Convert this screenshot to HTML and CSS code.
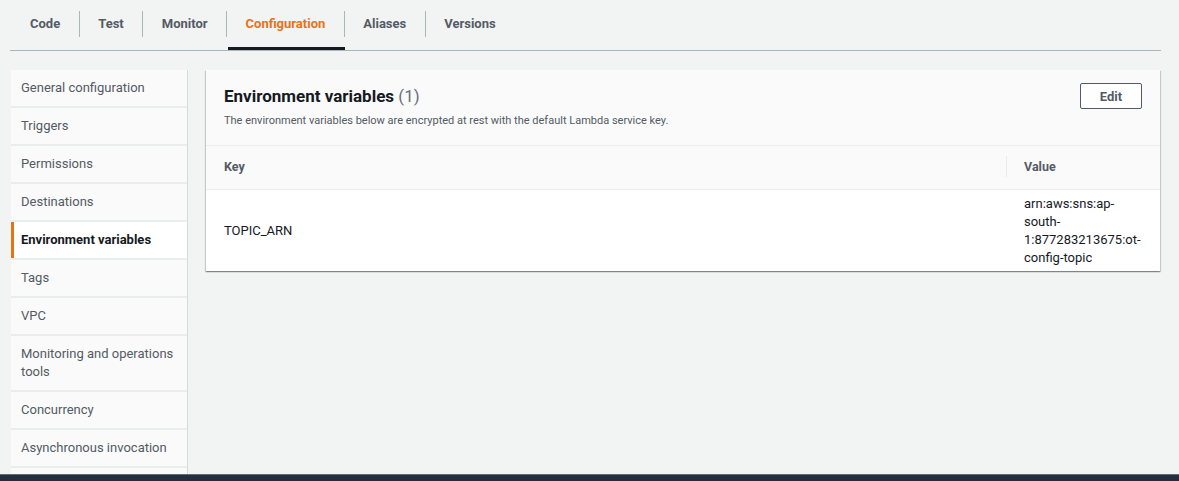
FILE: index.html
```html
<!DOCTYPE html>
<html lang="en">
<head>
<meta charset="utf-8">
<title>Configuration - Environment variables</title>
<link rel="stylesheet" href="styles.css">
</head>
<body>
<div class="page">
  <nav class="tabs">
    <div class="tab"><div class="tab-inner">Code</div><div class="tab-line"></div></div>
    <div class="tab"><div class="tab-inner">Test</div><div class="tab-line"></div></div>
    <div class="tab"><div class="tab-inner">Monitor</div><div class="tab-line"></div></div>
    <div class="tab active"><div class="tab-inner">Configuration</div><div class="tab-line"></div></div>
    <div class="tab"><div class="tab-inner">Aliases</div><div class="tab-line"></div></div>
    <div class="tab last"><div class="tab-inner">Versions</div><div class="tab-line"></div></div>
  </nav>

  <div class="content">
    <ul class="sidebar">
      <li class="side-item">General configuration</li>
      <li class="side-item">Triggers</li>
      <li class="side-item">Permissions</li>
      <li class="side-item">Destinations</li>
      <li class="side-item active">Environment variables</li>
      <li class="side-item">Tags</li>
      <li class="side-item">VPC</li>
      <li class="side-item">Monitoring and operations tools</li>
      <li class="side-item">Concurrency</li>
      <li class="side-item">Asynchronous invocation</li>
      <li class="side-item side-empty"></li>
    </ul>

    <section class="panel">
      <header class="panel-header">
        <div class="panel-title-row">
          <h2 class="panel-title">Environment variables <span class="count">(1)</span></h2>
          <button class="btn">Edit</button>
        </div>
        <p class="panel-desc">The environment variables below are encrypted at rest with the default Lambda service key.</p>
      </header>
      <div class="table">
        <div class="th th-key">Key</div>
        <div class="th th-value"><div class="th-divider">Value</div></div>
        <div class="td td-key">TOPIC_ARN</div>
        <div class="td td-value">arn:aws:sns:ap-south-1:877283213675:ot-config-topic</div>
      </div>
    </section>
  </div>
</div>
<div class="footer-bar"></div>
</body>
</html>
```

FILE: styles.css
```css
* { box-sizing: border-box; }

html, body {
  margin: 0;
  padding: 0;
  height: 481px;
  overflow: hidden;
}

body {
  background: #f2f3f3;
  font-family: Roboto, "Liberation Sans", Arial, sans-serif;
  color: #16191f;
}

/* Tabs */
.tabs {
  display: flex;
  height: 51px;
  margin: 0 18px 0 10px;
  border-bottom: 1px solid #aab7b8;
}

.tab {
  display: flex;
  flex-direction: column;
}

.tab-inner {
  margin-top: 11px;
  height: 26px;
  padding: 0 18.5px 1px 18.5px;
  display: flex;
  align-items: center;
  border-right: 1px solid #aab7b8;
  font-size: 13px;
  font-weight: 700;
  color: #545b64;
  line-height: 16px;
}

.tab:first-child .tab-inner { padding-left: 20px; }
.tab.last .tab-inner { border-right: none; }

.tab-line {
  margin-top: auto;
  height: 3px;
  margin-left: 1px;
}

.tab.active .tab-inner { color: #ec7211; }
.tab.active .tab-line { background: #16191f; }

/* Content */
.content {
  display: flex;
  align-items: flex-start;
  gap: 18px;
  padding: 19px 19px 0 11px;
}

.sidebar {
  list-style: none;
  margin: 0;
  padding: 0;
  width: 177px;
  flex: none;
  background: #eaeded;
  border-right: 1px solid #d5dbdb;
}

.side-item {
  background: #fafafa;
  padding: 9px 10px 9px 7px;
  font-size: 13px;
  line-height: 18px;
  color: #545b64;
  margin-bottom: 2px;
  border-left: 3px solid transparent;
}

.side-item.side-empty {
  height: 8px;
  padding: 0;
  margin-bottom: 0;
}

.side-item.active {
  background: #ffffff;
  border-left-color: #ec7211;
  color: #16191f;
  font-weight: 700;
}

/* Panel */
.panel {
  flex: 1;
  background: #ffffff;
  box-shadow: 0 1px 1px 0 rgba(0, 28, 36, 0.3), 1px 1px 1px 0 rgba(0, 28, 36, 0.15), -1px 1px 1px 0 rgba(0, 28, 36, 0.15);
}

.panel-header {
  background: #fafafa;
  padding: 13px 18px 16px 18px;
  border-bottom: 1px solid #eaeded;
}

.panel-title-row {
  display: flex;
  justify-content: space-between;
  align-items: center;
  height: 26px;
}

.panel-title {
  margin: 0;
  font-size: 17px;
  font-weight: 700;
  line-height: 26px;
  color: #16191f;
}

.count {
  font-weight: 400;
  color: #687078;
}

.btn {
  width: 62px;
  height: 26px;
  border: 1px solid #545b64;
  border-radius: 2px;
  background: #ffffff;
  color: #545b64;
  font-family: inherit;
  font-size: 13px;
  font-weight: 700;
  padding: 0;
}

.panel-desc {
  margin: 4px 0 0 0;
  font-size: 11px;
  line-height: 16px;
  color: #545b64;
}

/* Table */
.table {
  display: grid;
  grid-template-columns: 1fr 154px;
}

.th {
  background: #fafafa;
  height: 44px;
  padding-bottom: 2px;
  border-bottom: 1px solid #eaeded;
  font-size: 12.5px;
  font-weight: 700;
  color: #545b64;
  display: flex;
  align-items: center;
}

.th-key { padding-left: 18px; padding-right: 18px; }

.th-divider {
  border-left: 1px solid #eaeded;
  height: 21px;
  padding-left: 17px;
  display: flex;
  align-items: center;
  width: 100%;
}

.td {
  font-size: 13px;
  line-height: 18px;
  color: #16191f;
  padding: 5px 12px 4px 18px;
  min-height: 81px;
}

.td-key {
  display: flex;
  align-items: center;
}

.footer-bar {
  position: fixed;
  left: 0;
  right: 0;
  bottom: 0;
  height: 7px;
  background: #232f3e;
  border-top: 1px solid #5f6b7a;
}
```
